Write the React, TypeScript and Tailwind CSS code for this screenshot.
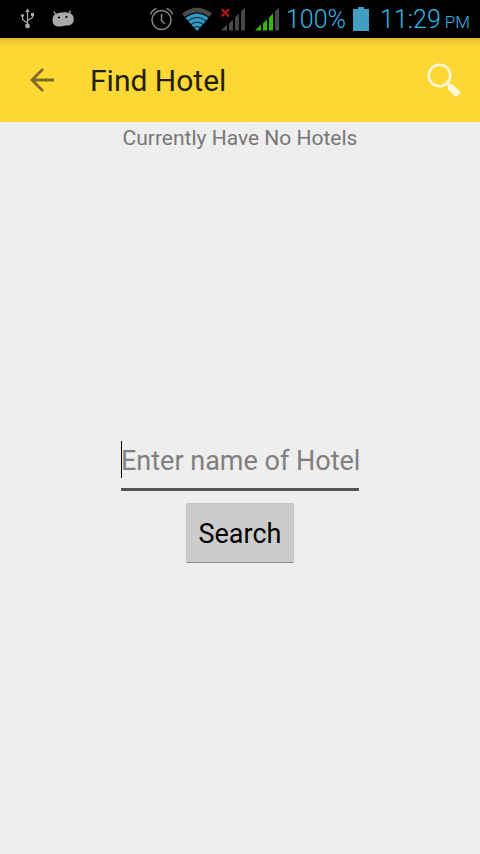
import React from "react";

function UsbIcon() {
  return (
    <svg width="16" height="22" viewBox="0 0 16 22" fill="none" stroke="#a8a8a8" strokeWidth="1.3" aria-hidden="true">
      <path d="M7.500 3V18M7.500 15L2.500 11.500V8M7.500 12.500L12.500 9.500V6" />
      <circle cx="7.500" cy="18" r="2.400" fill="#a8a8a8" stroke="none" />
      <circle cx="2.500" cy="7.500" r="1.600" fill="#a8a8a8" stroke="none" />
      <path d="M5.200 4L7.500 0.500L9.800 4Z M11 5H14V8H11Z" fill="#a8a8a8" stroke="none" />
    </svg>
  );
}

function DebugIcon() {
  return (
    <svg width="24" height="18" viewBox="0 0 24 18" aria-hidden="true">
      <path d="M4 5L2 1.500M17 4L18.500 0.500" stroke="#a8a8a8" strokeWidth="1.300" />
      <path d="M0.500 10C0.500 5 4 3 7 3C10 2 15 2 17 3C21 4 22 7 21.800 10C21.500 14 18 16 13.500 15.500C9 17 4 17 2.500 15C0.500 14 0.500 11 0.500 10Z" fill="#a8a8a8" />
      <circle cx="7" cy="7.500" r="1.100" />
      <circle cx="14.500" cy="7" r="1.100" />
    </svg>
  );
}

function AlarmIcon() {
  return (
    <svg width="24" height="24" viewBox="0 0 24 24" fill="none" stroke="#858585" strokeWidth="1.500" aria-hidden="true">
      <circle cx="11.500" cy="13" r="9.500" />
      <path d="M11.500 7V13.500L15 17M0.500 7.500C1.500 4.500 3.500 2.500 6.500 1.500M22.500 7.500C21.500 4.500 19.500 2.500 16.500 1.500" />
    </svg>
  );
}

function WifiIcon() {
  return (
    <svg width="30" height="24" viewBox="0 0 30 24" aria-hidden="true">
      <path d="M0 6.500Q15 -5 30 6.500L27.300 10Q15 1 2.700 10Z" fill="#484848" />
      <path d="M3.500 11Q15 2 26.500 11L15 24Z" fill="#2f9ac4" />
      <path d="M5.500 14.200Q15 6.500 24.500 14.200M8.500 17.700Q15 12.500 21.500 17.700M11.500 20.800Q15 18 18.500 20.800" fill="none" stroke="#000" strokeWidth="0.800" />
    </svg>
  );
}

function SignalIcon({ color, missing }: { color: string; missing?: boolean }) {
  return (
    <svg width="25" height="24" viewBox="0 0 25 24" aria-hidden="true">
      <path d="M0 23.500L6 17.500V23.500ZM8 16.500L12 12.500V23.500H8ZM14 10.500L18 6.500V23.500H14Z" fill={color} />
      <path d="M20 4.500L24 0.500V23.500H20Z" fill="#484848" />
      {missing && <path d="M0.500 2L8 9.500M8 2L0.500 9.500" stroke="#b81414" strokeWidth="2.200" />}
    </svg>
  );
}

function StatusBar() {
  return (
    <div className="flex h-[38px] items-center bg-black pr-[10px] pl-5 text-[25px] font-light text-[#33b5e5]">
      <UsbIcon />
      <span className="ml-4"><DebugIcon /></span>
      <div className="ml-auto flex items-center">
        <AlarmIcon />
        <span className="ml-2"><WifiIcon /></span>
        <span className="ml-[9px]"><SignalIcon color="#484848" missing /></span>
        <span className="ml-[9px]"><SignalIcon color="#36b800" /></span>
        <span className="ml-[6px] pt-[2px]">100%</span>
        <svg className="ml-[7px]" width="16" height="24" viewBox="0 0 16 24" aria-hidden="true">
          <path d="M5 0H11V2H16V24H0V2H5Z" fill="#429dc3" />
        </svg>
        <div className="ml-[11px] flex items-baseline gap-1 pt-[2px]">
          <span>11:29</span>
          <span className="text-[17px]">PM</span>
        </div>
      </div>
    </div>
  );
}

export default function App() {
  return (
    <div className="flex min-h-screen flex-col bg-[#eeeeee] font-[Roboto,sans-serif]">
      <StatusBar />
      <header className="flex h-[84px] items-center bg-[#fdd835] bg-linear-to-b from-[#e0bd2d] to-[#fdd835] to-10% pr-[18px] pl-[29px]">
        <button type="button" aria-label="Back">
          <svg width="26" height="26" viewBox="0 0 26 26" fill="none" stroke="#7b6a20" strokeWidth="2.800">
            <path d="M25 13H3M14 2L3 13L14 24" />
          </svg>
        </button>
        <h1 className="ml-[35px] text-[30px] text-[#211e0c]">Find Hotel</h1>
        <button type="button" aria-label="Search hotels" className="ml-auto">
          <svg width="36" height="36" viewBox="0 0 36 36" fill="none" stroke="#fff7d7">
            <circle cx="13.500" cy="13.500" r="10.700" strokeWidth="2.600" />
            <path d="M20.500 20.500L25 25" strokeWidth="3" />
            <path d="M22 24L25.500 21.500L34.500 30Q35 30.500 34.500 31L31 34.500Q30 35 29.500 34.500L22 27.500Z" fill="#fff7d7" stroke="none" />
          </svg>
        </button>
      </header>
      <main className="flex flex-1 flex-col items-center text-center">
        <p className="text-[21px] leading-8 text-[#777777]">Currently Have No Hotels</p>
        <form className="flex flex-1 flex-col items-center justify-center pb-1" onSubmit={(e) => e.preventDefault()}>
          <div className="relative w-[238px] border-b-3 border-[#555555] pb-[10px]">
            <span className="absolute top-0 left-0 h-[37px] w-px bg-black" aria-hidden="true" />
            <input
              type="text"
              aria-label="Enter name of Hotel"
              placeholder="Enter name of Hotel"
              className="block h-[37px] w-[242px] pt-1 text-[27px] text-black outline-none placeholder:text-[#808080]"
            />
          </div>
          <button type="submit" className="mt-3 h-[60px] rounded-xs border border-[#c4c4c4] border-b-[#8c8c8c] bg-[#cccccc] px-3 pt-[2px] text-[27px] text-black">
            Search
          </button>
        </form>
      </main>
    </div>
  );
}
